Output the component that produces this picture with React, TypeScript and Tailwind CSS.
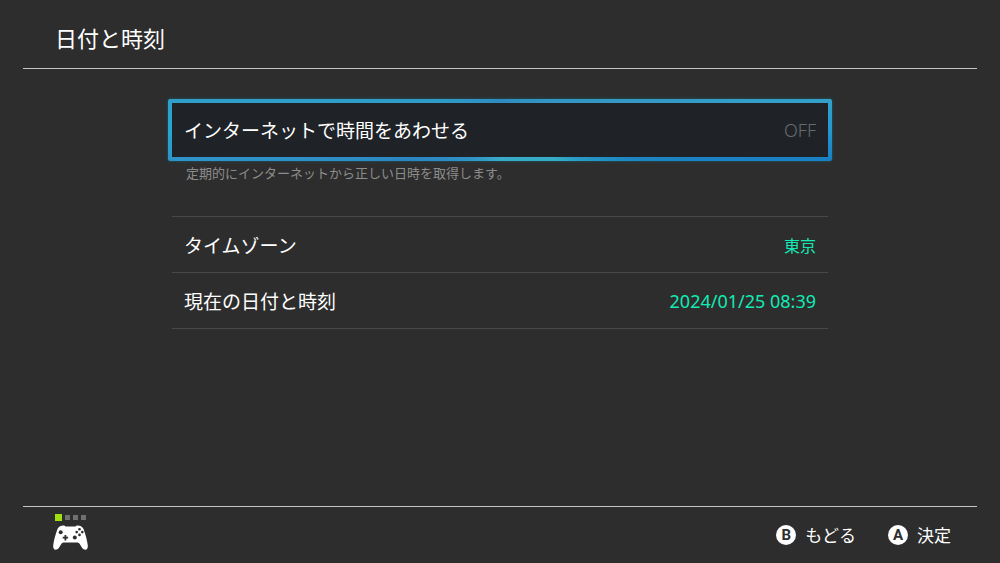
import type { ReactNode } from "react";

type RowProps = {
  label: string;
  value: string;
  valueClass: string;
};

const SettingRow = ({ label, value, valueClass }: RowProps) => (
  <li className="border-b border-[#484848]">
    <button type="button" className="flex h-[55px] w-full items-center justify-between px-3 pt-0.5">
      <span className="text-[19px]">{label}</span>
      <span className={valueClass}>{value}</span>
    </button>
  </li>
);

const FooterAction = ({ letter, children }: { letter: string; children: ReactNode }) => (
  <button type="button" className="flex items-center gap-[9px] text-[17px]">
    <span className="flex size-5 items-center justify-center rounded-full bg-white font-['Roboto',sans-serif] text-[15px] leading-none font-bold text-[#2d2d2d]">
      {letter}
    </span>
    {children}
  </button>
);

const Gamepad = () => (
  <svg viewBox="0 0 35 26" className="h-[26px] w-[35px]" aria-hidden="true">
    <path
      fill="#fff"
      d="M7.500 1C8.800.4 10.300.2 11.300.6l1.200.9h10l1.200-.9c1-.4 2.500-.2 3.800.4 1.700.8 2.500 1.800 3.100 3.300C32.500 9.500 34.300 16 34.800 20.500c.2 2.600-.7 4.200-2.300 4.300-1.700 0-2.900-1-3.900-2.700l-1.900-3c-.7-1-1.500-1.500-2.700-1.500H11c-1.200 0-2 .5-2.700 1.500l-1.900 3c-1 1.700-2.200 2.700-3.900 2.700C.9 24.700 0 23.100.2 20.500.7 16 2.500 9.500 4.400 4.300 5 2.800 5.800 1.800 7.500 1Z"
    />
    <g fill="#2d2d2d">
      <circle cx="7.700" cy="7.200" r="2" />
      <circle cx="21.800" cy="12.600" r="2" />
      <path d="M11.500 10h1.800v1.800h1.800v1.800h-1.800v1.800h-1.800v-1.800H9.700v-1.800h1.800Z" />
      <circle cx="26.500" cy="4.300" r="1.300" />
      <circle cx="26.500" cy="9.900" r="1.300" />
      <circle cx="23.700" cy="7.100" r="1.300" />
      <circle cx="29.300" cy="7.100" r="1.300" />
    </g>
  </svg>
);

const App = () => {
  return (
    <div className="flex min-h-screen flex-col bg-[#2d2d2d] px-[23px] font-['Noto_Sans_CJK_JP',sans-serif] font-normal text-white">
      <header className="flex h-[69px] items-center border-b border-[#c4c4c4] px-8 pt-1.5">
        <h1 className="text-[22px] leading-8">日付と時刻</h1>
      </header>

      <main className="mx-auto w-full max-w-[656px] flex-1 pt-[30px]">
        {/* Focus frame: the colour sweeps around the edge */}
        <div className="-mx-1 rounded-xs bg-[conic-gradient(#2e8ac0,#3499c5_80deg,#33a0ca_85deg,#2598d0_90deg,#1a80c4_95deg,#1c86c2_102deg,#34adc6_117deg,#3aabc8_180deg,#2b86c2_253deg,#2f94c8_265deg,#27a6d0_270deg,#2f9fca_275deg,#2e8ac0)] p-1 shadow-[0_0_3px_#1b6070]">
          <button
            type="button"
            aria-describedby="sync-help"
            className="flex h-[54px] w-full items-center justify-between bg-[#1f2328] px-3"
          >
            <span className="text-[19px]">インターネットで時間をあわせる</span>
            <span className="font-['Noto_Sans',sans-serif] text-[18px] font-light text-[#686b6e]">OFF</span>
          </button>
        </div>
        <p id="sync-help" className="px-3.5 pt-0.5 text-[13px] text-[#8c8c8c]">
          定期的にインターネットから正しい日時を取得します。
        </p>

        <ul className="mt-[33px] border-t border-[#484848]">
          <SettingRow label="タイムゾーン" value="東京" valueClass="text-[16px] text-[#13eab4]" />
          <SettingRow
            label="現在の日付と時刻"
            value="2024/01/25 08:39"
            valueClass="font-['Noto_Sans',sans-serif] text-[18px] text-[#13eab4]"
          />
        </ul>
      </main>

      <footer className="flex h-[57px] items-center justify-between border-t border-[#c4c4c4] pr-[26px] pl-[30px]">
        <div className="flex flex-col gap-1 pb-1.5">
          <div className="flex items-center gap-[3px] px-0.5">
            <span className="size-[7px] bg-[#a0e010]" />
            <span className="size-[5px] bg-[#707070]" />
            <span className="size-[5px] bg-[#707070]" />
            <span className="size-[5px] bg-[#707070]" />
          </div>
          <Gamepad />
        </div>
        <div className="flex gap-8">
          <FooterAction letter="B">もどる</FooterAction>
          <FooterAction letter="A">決定</FooterAction>
        </div>
      </footer>
    </div>
  );
};

export default App;
